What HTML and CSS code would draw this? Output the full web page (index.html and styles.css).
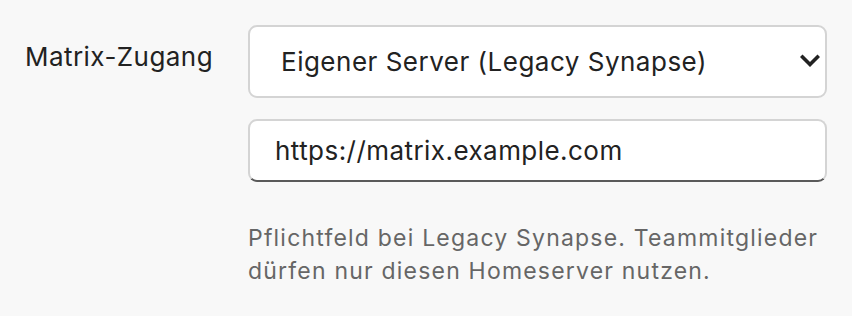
FILE: index.html
```html
<!DOCTYPE html>
<html>
    <head>
        <meta charset="utf-8">
        <link rel="stylesheet" href="styles.css">
    </head>
    <body>
        <div class="row">
            <label class="label" for="matrixMode">Matrix-Zugang</label>
            <div class="fields">
                <div class="select-wrap">
                    <select id="matrixMode" class="select">
                        <option>Matrix.org</option>
                        <option selected="true">Eigener Server (Legacy Synapse)</option>
                    </select>
                    <svg class="chevron" width="20" height="14" viewBox="0 0 20 14">
                        <path d="M2.5 3 L10 10.5 L17.5 3" fill="none" stroke="#222" stroke-width="3.6" stroke-linecap="square"/>
                    </svg>
                </div>
                <input class="textInput" type="text" value="https://matrix.example.com" />
                <p class="hint">
                    Pflichtfeld bei Legacy Synapse. Teammitglieder
                    dürfen nur diesen Homeserver nutzen.
                </p>
            </div>
        </div>
    </body>
</html>
```

FILE: styles.css
```css
body{
    margin: 0;
    background-color: #f8f8f8;
    font-family: Inter, "Noto Sans", sans-serif;
    color: #222;
}

.row{
    display: flex;
    padding: 25px 25px 0 25px;
}

.label{
    width: 223px;
    flex-shrink: 0;
    padding-top: 16px;
    font-size: 26px;
    line-height: 32px;
    letter-spacing: 0.45px;
}

.fields{
    flex: 1;
    display: flex;
    flex-direction: column;
}

.select-wrap{
    position: relative;
}

.select{
    appearance: none;
    -webkit-appearance: none;
    width: 100%;
    height: 73px;
    box-sizing: border-box;
    border: 2px solid #d4d4d4;
    border-radius: 9px;
    background-color: #fff;
    padding: 0 0 0 31px;
    font-family: inherit;
    font-size: 26px;
    letter-spacing: 0.5px;
    color: #222;
    margin: 0;
}

.chevron{
    position: absolute;
    right: 7px;
    top: 29px;
    pointer-events: none;
}

.textInput{
    margin-top: 21px;
    height: 63px;
    box-sizing: border-box;
    border: 2px solid #d4d4d4;
    border-bottom-color: #5a5a5a;
    border-radius: 9px;
    background-color: #fff;
    padding: 0 0 0 25px;
    font-family: inherit;
    font-size: 26px;
    letter-spacing: 0.45px;
    color: #222;
    outline: none;
}

.hint{
    margin: 40px 0 0 0;
    font-size: 23px;
    line-height: 33px;
    letter-spacing: 1.2px;
    color: #666;
}
```
